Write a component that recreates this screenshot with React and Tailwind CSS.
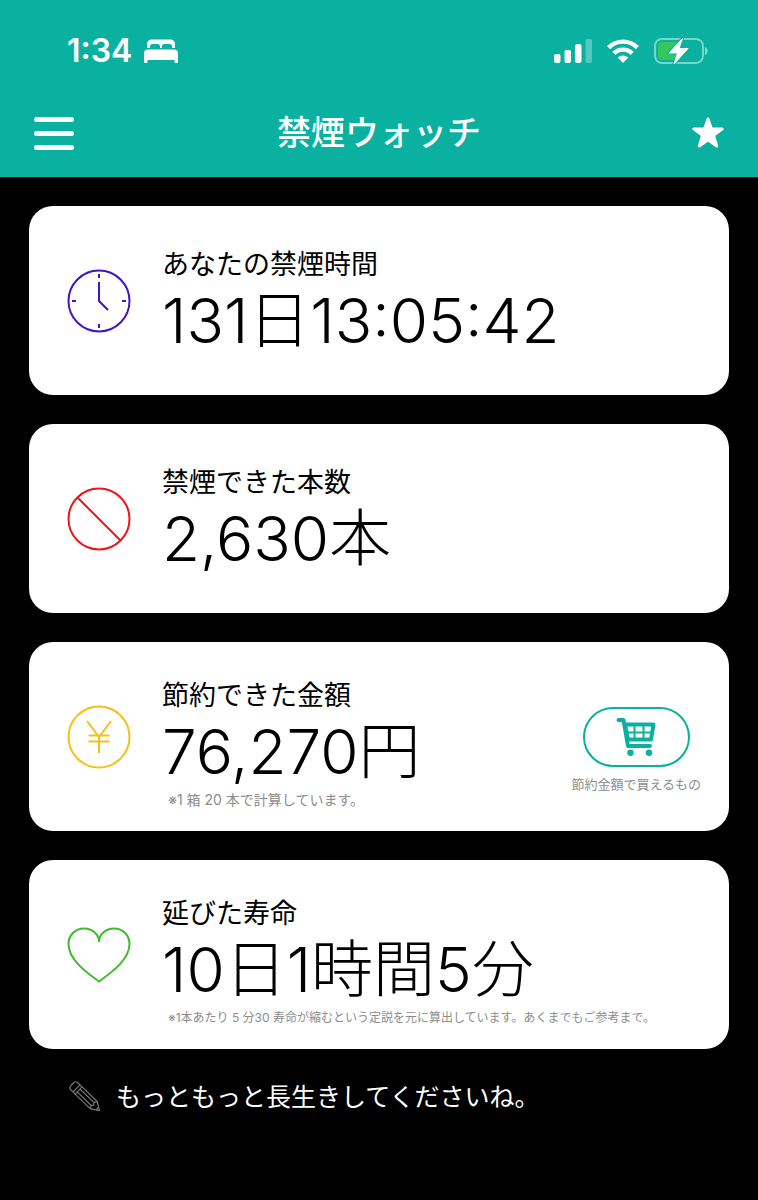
const BedIcon = () => (
  <svg className="w-[34px] h-6" viewBox="0 0 34 24" fill="#fff" aria-hidden="true">
    <path d="M3 9V5a4.500 4.500 0 0 1 4.500-4.500h19A4.500 4.500 0 0 1 31 5v4h-3V7.500a2.500 2.500 0 0 0-2.500-2.500h-5A2.500 2.500 0 0 0 18 7.500V9h-2V7.500A2.500 2.500 0 0 0 13.500 5h-5A2.500 2.500 0 0 0 6 7.500V9z" />
    <path d="M4 10.500h26a4 4 0 0 1 4 4V23a1 1 0 0 1-1 1h-1.500a1 1 0 0 1-1-1v-2h-27v2a1 1 0 0 1-1 1H1a1 1 0 0 1-1-1v-8.500a4 4 0 0 1 4-4z" />
  </svg>
);

const SignalIcon = () => (
  <svg className="w-[38px] h-6" viewBox="0 0 38 24" fill="#fff" aria-hidden="true">
    <rect x="0" y="15" width="6.500" height="9" rx="2" />
    <rect x="10.500" y="11" width="6.500" height="13" rx="2" />
    <rect x="21" y="5" width="6.500" height="19" rx="2" />
    <rect x="31.500" y="0" width="6.500" height="24" rx="2" opacity="0.3" />
  </svg>
);

const WifiIcon = () => (
  <svg className="w-8 h-6" viewBox="0 0 32 24" aria-hidden="true">
    <g fill="none" stroke="#fff" strokeWidth="4.400">
      <path d="M1.600 8.600a20.400 20.400 0 0 1 28.800 0" />
      <path d="M6.800 14.400a13 13 0 0 1 18.400 0" />
    </g>
    <path d="M16 24l-5.300-5.400a7.600 7.600 0 0 1 10.600 0z" fill="#fff" />
  </svg>
);

const BatteryIcon = () => (
  <svg className="w-[54px] h-7" viewBox="0 0 54 28" aria-hidden="true">
    <rect x="1" y="2" width="48" height="24" rx="7" fill="none" stroke="#fff" strokeOpacity="0.45" strokeWidth="2" />
    <path d="M51 10v8c1.600-.7 2.600-2.200 2.600-4s-1-3.300-2.600-4z" fill="#fff" fillOpacity="0.5" />
    <path d="M8 5h15v18H8a4 4 0 0 1-4-4V9a4 4 0 0 1 4-4z" fill="#35c759" />
    <path
      d="M28.500 1.500L15 16h8.500L20 27l14-15.500h-9z"
      fill="#fff"
      stroke="#0ab0a0"
      strokeWidth="3"
      strokeLinejoin="round"
      paintOrder="stroke"
    />
    <path d="M28.500 1.500L15 16h8.500L20 27l14-15.500h-9z" fill="#fff" stroke="#fff" strokeLinejoin="round" />
  </svg>
);

const StarIcon = () => (
  <svg className="w-8 h-8" viewBox="0 0 32 32" fill="#fff" stroke="#fff" strokeWidth="3" strokeLinejoin="round" aria-hidden="true">
    <path d="M16 2l3.400 9.900h10.800l-8.700 6.500 3.200 10.600-8.700-6.300-8.700 6.300 3.200-10.600-8.700-6.500h10.800z" />
  </svg>
);

const ClockIcon = () => (
  <svg className="w-16 h-16" viewBox="0 0 64 64" fill="none" stroke="#4114c4" strokeWidth="2" aria-hidden="true">
    <circle cx="32" cy="32" r="30.500" />
    <path d="M32 5v4M32 55v4M5 32h4M55 32h4" />
    <path d="M32 13v19l9 9" />
  </svg>
);

const BanIcon = () => (
  <svg className="w-16 h-16" viewBox="0 0 64 64" fill="none" stroke="#f01418" strokeWidth="2" aria-hidden="true">
    <circle cx="32" cy="32" r="30.500" />
    <path d="M10.500 10.500l43 43" />
  </svg>
);

const YenIcon = () => (
  <svg className="w-16 h-16" viewBox="0 0 64 64" fill="none" stroke="#f6c01c" strokeWidth="2" aria-hidden="true">
    <circle cx="32" cy="32" r="30.500" />
    <path d="M20 16l12 16 12-16M32 32v16M21.500 30.500h21M21.500 36.500h21" />
  </svg>
);

const HeartIcon = () => (
  <svg className="w-16 h-16" viewBox="0 0 64 64" fill="none" stroke="#3fbb2c" strokeWidth="2" aria-hidden="true">
    <path d="M32 19C32 11 25 5.500 17 5.500C8 5.500 1.500 12.500 1.500 21C1.500 36 18 48.500 32 58.500C46 48.500 62.500 36 62.500 21C62.500 12.500 56 5.500 47 5.500C39 5.500 32 11 32 19z" />
  </svg>
);

const CartIcon = () => (
  <svg className="w-10 h-10" viewBox="0 0 40 40" aria-hidden="true">
    <g fill="none" stroke="#0ab0a0" strokeLinecap="round" strokeLinejoin="round">
      <path d="M2.500 3H7.500l4.500 26h22" strokeWidth="4" />
      <path d="M9 7.500H37.500L35 22.500H12z" strokeWidth="4" />
      <path d="M10 15.500h26M18.500 8v15M27.500 8v15" strokeWidth="2" />
    </g>
    <circle cx="14.500" cy="35.800" r="3.200" fill="#0ab0a0" />
    <circle cx="33" cy="35.800" r="3.200" fill="#0ab0a0" />
  </svg>
);

const PencilIcon = () => (
  <svg className="w-8 h-8" viewBox="0 0 32 32" fill="none" stroke="#777" strokeWidth="1.200" strokeLinejoin="round" aria-hidden="true">
    <g transform="translate(6 6) rotate(44)">
      <path d="M5 -5H-1a3 3 0 0 0-3 3v4a3 3 0 0 0 3 3H5z" />
      <path d="M2 -5v10M5 -5H26L34 0L26 5H5" />
      <path d="M5 -2H24.500M5 2H24.500M26 -5L24.500 -2L26 0L24.500 2L26 5M31 -2v4" />
    </g>
  </svg>
);

const StatCard = ({ icon, label, value, note, children }) => (
  <section className="flex items-center min-h-[189px] pl-[38px] pr-7 bg-white rounded-3xl">
    <div className="shrink-0">{icon}</div>
    <div className={`flex-1 ml-[31px] whitespace-nowrap text-black ${note ? 'pt-[14px]' : ''}`}>
      <h2 className="text-[27px] leading-10">{label}</h2>
      <p className="text-[62px] leading-[72px] font-light">{value}</p>
      {note}
    </div>
    {children}
  </section>
);

const App = () => (
  <div className="min-h-screen bg-black font-['Inter','Noto_Sans_CJK_JP',sans-serif]" lang="ja">
    <header className="h-[177px] bg-[#0ab0a0] text-white">
      <div className="flex items-center justify-between h-[101px] pl-[67px] pr-[50px]">
        <div className="flex items-center gap-3">
          <span className="text-[32px] leading-10 font-semibold">1:34</span>
          <BedIcon />
        </div>
        <div className="flex items-center gap-[15px]">
          <SignalIcon />
          <WifiIcon />
          <BatteryIcon />
        </div>
      </div>
      <div className="flex items-center justify-between h-16 px-[34px]">
        <button type="button" aria-label="メニュー" className="flex flex-col gap-[9px] w-10">
          <span className="h-[5px] rounded-full bg-white"></span>
          <span className="h-[5px] rounded-full bg-white"></span>
          <span className="h-[5px] rounded-full bg-white"></span>
        </button>
        <h1 className="text-[34px] leading-10 font-medium">禁煙ウォッチ</h1>
        <button type="button" aria-label="お気に入り" className="flex justify-end w-10">
          <StarIcon />
        </button>
      </div>
    </header>

    <main className="flex flex-col gap-[29px] px-[29px] pt-[29px]">
      <StatCard icon={<ClockIcon />} label="あなたの禁煙時間" value="131日13:05:42" />
      <StatCard icon={<BanIcon />} label="禁煙できた本数" value="2,630本" />
      <StatCard
        icon={<YenIcon />}
        label="節約できた金額"
        value="76,270円"
        note={<p className="pl-[6px] text-sm leading-6 text-[#8c8c8c]">※1 箱 20 本で計算しています。</p>}
      >
        <div className="flex flex-col items-center gap-[7px] pt-7">
          <button
            type="button"
            aria-labelledby="shop-label"
            className="flex items-center justify-center w-[107px] h-[60px] border-2 border-[#0ab0a0] rounded-full"
          >
            <CartIcon />
          </button>
          <span id="shop-label" className="text-[13px] leading-5 whitespace-nowrap text-[#8c8c8c]">
            節約金額で買えるもの
          </span>
        </div>
      </StatCard>
      <StatCard
        icon={<HeartIcon />}
        label="延びた寿命"
        value="10日1時間5分"
        note={
          <p className="pl-[6px] text-xs leading-6 text-[#8c8c8c]">
            ※1本あたり 5 分30 寿命が縮むという定説を元に算出しています。あくまでもご参考まで。
          </p>
        }
      />
    </main>

    <footer className="flex items-center gap-[15px] pl-[69px] pt-7 text-white">
      <PencilIcon />
      <p className="text-[25px] leading-10">もっともっと長生きしてくださいね。</p>
    </footer>
  </div>
);

export default App;
